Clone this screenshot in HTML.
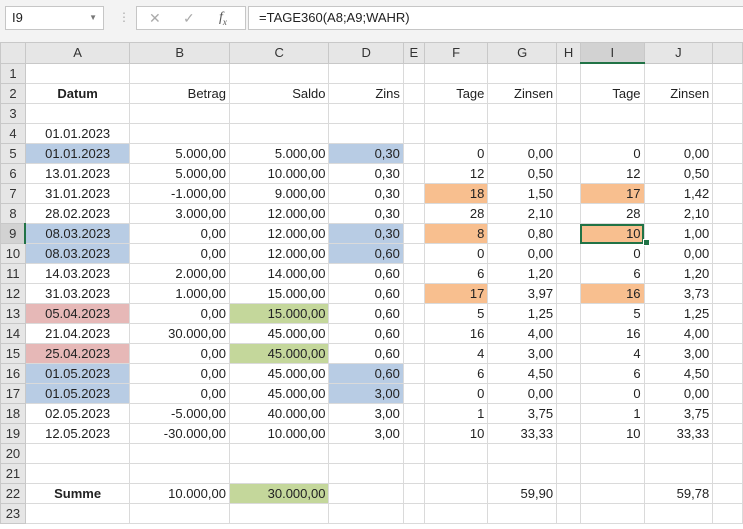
<!DOCTYPE html>
<html><head><meta charset="utf-8"><style>
body{margin:0;width:743px;height:529px;overflow:hidden;background:#fff;font-family:"Liberation Sans",sans-serif;color:#222;}
.top{position:absolute;left:0;top:0;width:743px;height:42px;background:#f3f3f3;}
.nb{position:absolute;left:5px;top:6px;width:99px;height:24px;background:#fff;border:1px solid #c6c6c6;box-sizing:border-box;font-size:13px;line-height:22px;padding-left:6px;}
.nb span{position:absolute;right:6px;top:0;font-size:8px;color:#777;}
.fx{position:absolute;left:136px;top:6px;width:110px;height:24px;background:#fff;border:1px solid #c6c6c6;box-sizing:border-box;color:#aaa;font-size:14px;line-height:22px;}
.fi{position:absolute;left:248px;top:6px;width:500px;height:24px;background:#fff;border:1px solid #c6c6c6;box-sizing:border-box;font-size:13px;line-height:22px;padding-left:10px;}
table{position:absolute;left:0;top:42px;border-collapse:collapse;table-layout:fixed;font-size:13px;}
td{height:19px;border:1px solid #dadada;padding:0 3px;text-align:right;white-space:nowrap;overflow:hidden;}
tr.h td{background:#e6e6e6;text-align:center;border-color:#c8c8c8;color:#333;}
td.r{background:#e6e6e6;text-align:center;padding:0;border-color:#c8c8c8;color:#333;}
.c{text-align:center}.b{font-weight:bold}
.bl{background:#b8cce4}.pk{background:#e6b8b7}.gr{background:#c4d79b}.or{background:#f8bf8f}
.sel{outline:2px solid #217346;outline-offset:-2px;position:relative}
</style></head><body>
<div class="top">
<div class="nb">I9<span>▼</span></div>
<div style="position:absolute;left:118px;top:10px;color:#aaa;font-size:12px">⋮</div>
<div class="fx"><span style="position:absolute;left:12px">✕</span><span style="position:absolute;left:46px">✓</span><span style="position:absolute;left:82px;color:#555;font-style:italic;font-family:'Liberation Serif',serif">f<sub style="font-size:9px">x</sub></span></div>
<div class="fi">=TAGE360(A8;A9;WAHR)</div>
</div>
<table>
<colgroup><col style="width:25px"><col style="width:105px"><col style="width:100px"><col style="width:100px"><col style="width:75px"><col style="width:21px"><col style="width:64px"><col style="width:69px"><col style="width:24px"><col style="width:64px"><col style="width:69px"><col style="width:30px"></colgroup>
<tr class="h"><td style="background:#e6e6e6"></td><td>A</td><td>B</td><td>C</td><td>D</td><td>E</td><td>F</td><td>G</td><td>H</td><td style="background:#d2d2d2;border-bottom:2px solid #217346">I</td><td>J</td><td></td></tr>
<tr><td class="r">1</td><td></td><td></td><td></td><td></td><td></td><td></td><td></td><td></td><td></td><td></td><td></td></tr>
<tr><td class="r">2</td><td class="c b">Datum</td><td>Betrag</td><td>Saldo</td><td>Zins</td><td></td><td>Tage</td><td>Zinsen</td><td></td><td>Tage</td><td>Zinsen</td><td></td></tr>
<tr><td class="r">3</td><td></td><td></td><td></td><td></td><td></td><td></td><td></td><td></td><td></td><td></td><td></td></tr>
<tr><td class="r">4</td><td class="c">01.01.2023</td><td></td><td></td><td></td><td></td><td></td><td></td><td></td><td></td><td></td><td></td></tr>
<tr><td class="r">5</td><td class="c bl">01.01.2023</td><td>5.000,00</td><td>5.000,00</td><td class="bl">0,30</td><td></td><td>0</td><td>0,00</td><td></td><td>0</td><td>0,00</td><td></td></tr>
<tr><td class="r">6</td><td class="c">13.01.2023</td><td>5.000,00</td><td>10.000,00</td><td>0,30</td><td></td><td>12</td><td>0,50</td><td></td><td>12</td><td>0,50</td><td></td></tr>
<tr><td class="r">7</td><td class="c">31.01.2023</td><td>-1.000,00</td><td>9.000,00</td><td>0,30</td><td></td><td class="or">18</td><td>1,50</td><td></td><td class="or">17</td><td>1,42</td><td></td></tr>
<tr><td class="r">8</td><td class="c">28.02.2023</td><td>3.000,00</td><td>12.000,00</td><td>0,30</td><td></td><td>28</td><td>2,10</td><td></td><td>28</td><td>2,10</td><td></td></tr>
<tr><td class="r" style="background:#d2d2d2;border-right:2px solid #217346">9</td><td class="c bl">08.03.2023</td><td>0,00</td><td>12.000,00</td><td class="bl">0,30</td><td></td><td class="or">8</td><td>0,80</td><td></td><td class="or sel">10</td><td>1,00</td><td></td></tr>
<tr><td class="r">10</td><td class="c bl">08.03.2023</td><td>0,00</td><td>12.000,00</td><td class="bl">0,60</td><td></td><td>0</td><td>0,00</td><td></td><td>0</td><td>0,00</td><td></td></tr>
<tr><td class="r">11</td><td class="c">14.03.2023</td><td>2.000,00</td><td>14.000,00</td><td>0,60</td><td></td><td>6</td><td>1,20</td><td></td><td>6</td><td>1,20</td><td></td></tr>
<tr><td class="r">12</td><td class="c">31.03.2023</td><td>1.000,00</td><td>15.000,00</td><td>0,60</td><td></td><td class="or">17</td><td>3,97</td><td></td><td class="or">16</td><td>3,73</td><td></td></tr>
<tr><td class="r">13</td><td class="c pk">05.04.2023</td><td>0,00</td><td class="gr">15.000,00</td><td>0,60</td><td></td><td>5</td><td>1,25</td><td></td><td>5</td><td>1,25</td><td></td></tr>
<tr><td class="r">14</td><td class="c">21.04.2023</td><td>30.000,00</td><td>45.000,00</td><td>0,60</td><td></td><td>16</td><td>4,00</td><td></td><td>16</td><td>4,00</td><td></td></tr>
<tr><td class="r">15</td><td class="c pk">25.04.2023</td><td>0,00</td><td class="gr">45.000,00</td><td>0,60</td><td></td><td>4</td><td>3,00</td><td></td><td>4</td><td>3,00</td><td></td></tr>
<tr><td class="r">16</td><td class="c bl">01.05.2023</td><td>0,00</td><td>45.000,00</td><td class="bl">0,60</td><td></td><td>6</td><td>4,50</td><td></td><td>6</td><td>4,50</td><td></td></tr>
<tr><td class="r">17</td><td class="c bl">01.05.2023</td><td>0,00</td><td>45.000,00</td><td class="bl">3,00</td><td></td><td>0</td><td>0,00</td><td></td><td>0</td><td>0,00</td><td></td></tr>
<tr><td class="r">18</td><td class="c">02.05.2023</td><td>-5.000,00</td><td>40.000,00</td><td>3,00</td><td></td><td>1</td><td>3,75</td><td></td><td>1</td><td>3,75</td><td></td></tr>
<tr><td class="r">19</td><td class="c">12.05.2023</td><td>-30.000,00</td><td>10.000,00</td><td>3,00</td><td></td><td>10</td><td>33,33</td><td></td><td>10</td><td>33,33</td><td></td></tr>
<tr><td class="r">20</td><td></td><td></td><td></td><td></td><td></td><td></td><td></td><td></td><td></td><td></td><td></td></tr>
<tr><td class="r">21</td><td></td><td></td><td></td><td></td><td></td><td></td><td></td><td></td><td></td><td></td><td></td></tr>
<tr><td class="r">22</td><td class="c b">Summe</td><td>10.000,00</td><td class="gr">30.000,00</td><td></td><td></td><td></td><td>59,90</td><td></td><td></td><td>59,78</td><td></td></tr>
<tr><td class="r">23</td><td></td><td></td><td></td><td></td><td></td><td></td><td></td><td></td><td></td><td></td><td></td></tr>
</table>
<div style="position:absolute;left:643px;top:239px;width:5px;height:5px;background:#217346;border:1px solid #fff"></div>
</body></html>
